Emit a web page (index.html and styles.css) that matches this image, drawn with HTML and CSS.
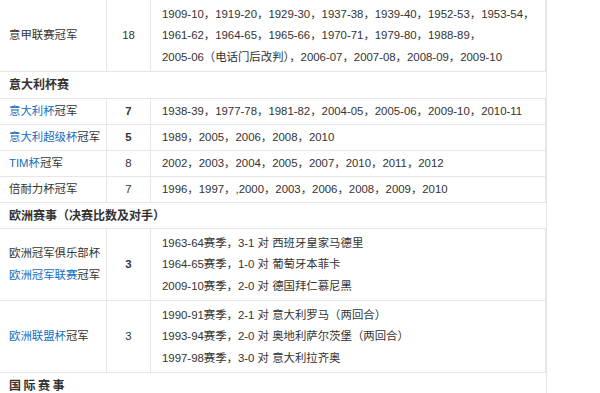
FILE: index.html
```html
<!DOCTYPE html>
<html lang="zh-CN">
<head>
<meta charset="utf-8">
<title>荣誉</title>
<link rel="stylesheet" href="styles.css">
</head>
<body>
<table class="honors">
  <colgroup>
    <col class="c-name">
    <col class="c-num">
    <col class="c-years">
  </colgroup>
  <tbody>
    <tr class="multi">
      <td>意甲联赛冠军</td>
      <td class="num">18</td>
      <td>1909-10，1919-20，1929-30，1937-38，1939-40，1952-53，1953-54，<br>1961-62，1964-65，1965-66，1970-71，1979-80，1988-89，<br>2005-06（电话门后改判），2006-07，2007-08，2008-09，2009-10</td>
    </tr>
    <tr class="section">
      <td colspan="3">意大利杯赛</td>
    </tr>
    <tr>
      <td><a class="link" href="#">意大利杯</a>冠军</td>
      <td class="num strong">7</td>
      <td>1938-39，1977-78，1981-82，2004-05，2005-06，2009-10，2010-11</td>
    </tr>
    <tr>
      <td><a class="link" href="#">意大利超级杯</a>冠军</td>
      <td class="num strong">5</td>
      <td>1989，2005，2006，2008，2010</td>
    </tr>
    <tr>
      <td><a class="link" href="#">TIM杯</a>冠军</td>
      <td class="num">8</td>
      <td>2002，2003，2004，2005，2007，2010，2011，2012</td>
    </tr>
    <tr>
      <td>倍耐力杯冠军</td>
      <td class="num">7</td>
      <td>1996，1997，,2000，2003，2006，2008，2009，2010</td>
    </tr>
    <tr class="section">
      <td colspan="3">欧洲赛事（决赛比数及对手）</td>
    </tr>
    <tr class="multi">
      <td>欧洲冠军俱乐部杯<br><a class="link" href="#">欧洲冠军联赛</a>冠军</td>
      <td class="num strong">3</td>
      <td>1963-64赛季，3-1 对 西班牙皇家马德里<br>1964-65赛季，1-0 对 葡萄牙本菲卡<br>2009-10赛季，2-0 对 德国拜仁慕尼黑</td>
    </tr>
    <tr class="multi">
      <td><a class="link" href="#">欧洲联盟杯</a>冠军</td>
      <td class="num">3</td>
      <td>1990-91赛季，2-1 对 意大利罗马（两回合）<br>1993-94赛季，2-0 对 奥地利萨尔茨堡（两回合）<br>1997-98赛季，3-0 对 意大利拉齐奥</td>
    </tr>
    <tr class="section wide">
      <td colspan="3">国际赛事</td>
    </tr>
  </tbody>
</table>
</body>
</html>
```

FILE: styles.css
```css
html, body {
  margin: 0;
  padding: 0;
  background: #ffffff;
}

body {
  font-family: "Liberation Sans", Arial, "Noto Sans CJK SC", sans-serif;
  font-size: 11.4px;
  color: #333333;
}

.honors {
  border-collapse: separate;
  border-spacing: 0;
  table-layout: fixed;
  width: 546px;
  border-right: 1px solid #e6e6e6;
}

.c-name { width: 107px; }
.c-num { width: 44px; }
.c-years { width: 395px; }

.honors td {
  border-right: 1px solid #e6e6e6;
  border-bottom: 1px solid #e6e6e6;
  padding: 2px 10px 1.5px 11px;
  line-height: 21.5px;
  vertical-align: middle;
  white-space: nowrap;
}

.honors td:first-child {
  padding-left: 9px;
  padding-right: 4px;
}

.honors tr.multi td {
  padding-top: 3.5px;
  padding-bottom: 3px;
}

.honors td.num {
  text-align: center;
  padding-left: 0;
  padding-right: 0;
}

.honors td.strong {
  font-weight: bold;
}

.honors tr.section td {
  font-size: 12px;
  font-weight: bold;
  color: #333333;
  border-right: none;
  padding-top: 3px;
  padding-bottom: 1px;
}

.honors tr.wide td {
  letter-spacing: 2.5px;
}

.link {
  color: #136ec2;
  text-decoration: none;
}
```
